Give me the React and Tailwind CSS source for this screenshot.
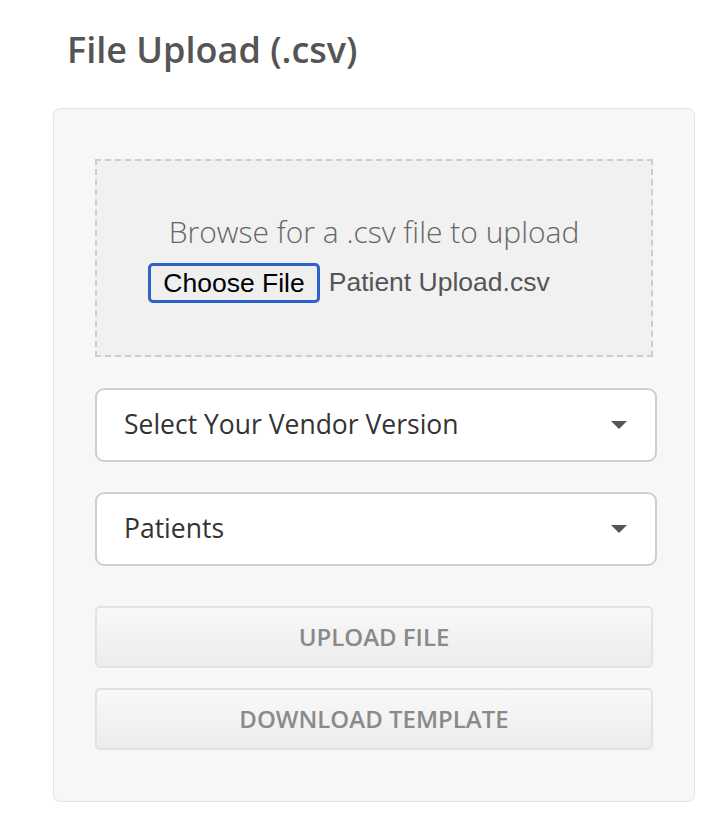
export default function App() {
  return (
    <div className="min-h-screen bg-white pl-[53px] pt-[24px] font-['Open_Sans',sans-serif]">
      <h2 className="ml-[14px] text-[36px] font-semibold leading-[52px] text-[#555]">File Upload (.csv)</h2>
      <div className="mt-[32px] w-[642px] rounded-[7px] border border-[#e4e4e4] bg-[#f7f7f7] pl-[41px] pr-[37px] pt-[50px] pb-[51px]">
        {/* drop zone */}
        <div className="mr-[4px] flex h-[198px] flex-col items-center justify-center border-2 border-dashed border-[#cdcdcd] bg-[#f1f1f1]">
          <p className="text-[30px] font-light leading-[38px] text-[#666]">Browse for a .csv file to upload</p>
          <div className="mt-[12px] mr-[50px] flex items-center font-['Liberation_Sans',Arial,sans-serif] text-[26.5px]">
            <button className="h-[40px] rounded-[5px] border-[3px] border-[#2d62c9] bg-[#efefef] px-[12px] leading-none text-black">
              Choose File
            </button>
            <span className="ml-[9px] text-[#555]">Patient Upload.csv</span>
          </div>
        </div>

        {/* selects */}
        <div className="mt-[31px] flex h-[74px] items-center justify-between rounded-[9px] border-2 border-[#cfcfcf] bg-white pl-[27px] pr-[28px]">
          <span className="text-[26.5px] text-[#333]">Select Your Vendor Version</span>
          <svg width="16" height="8" viewBox="0 0 16 8"><path d="M0 0h16L8 8z" fill="#555" /></svg>
        </div>
        <div className="mt-[30px] flex h-[74px] items-center justify-between rounded-[9px] border-2 border-[#cfcfcf] bg-white pl-[27px] pr-[28px]">
          <span className="text-[26.5px] text-[#333]">Patients</span>
          <svg width="16" height="8" viewBox="0 0 16 8"><path d="M0 0h16L8 8z" fill="#555" /></svg>
        </div>

        {/* actions */}
        <button className="mt-[40px] flex h-[62px] w-[558px] items-center justify-center rounded-[5px] border-2 border-[#e2e2e2] bg-gradient-to-b from-[#f9f9f9] to-[#ececec] text-[24px] font-semibold text-[#8a8a8a]">
          UPLOAD FILE
        </button>
        <button className="mt-[20px] flex h-[62px] w-[558px] items-center justify-center rounded-[5px] border-2 border-[#e2e2e2] bg-gradient-to-b from-[#f9f9f9] to-[#ececec] text-[24px] font-semibold text-[#8a8a8a]">
          DOWNLOAD TEMPLATE
        </button>
      </div>
    </div>
  );
}
